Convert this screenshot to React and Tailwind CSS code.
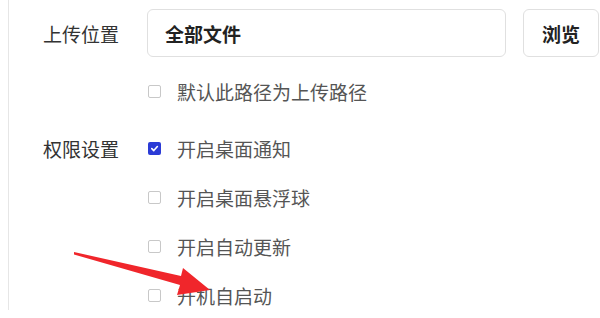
import React from "react";

const font = { fontFamily: '"Noto Sans CJK SC", "Noto Sans", sans-serif' };

function Box({ checked }) {
  if (checked) {
    return (
      <span className="flex h-[13px] w-[13px] items-center justify-center rounded-[2px] bg-[#2b3bd6]">
        <svg width="9" height="9" viewBox="0 0 10 10">
          <path d="M2 5.2 L4.2 7.3 L8.2 2.8" fill="none" stroke="#fff" strokeWidth="1.8" strokeLinecap="round" strokeLinejoin="round" />
        </svg>
      </span>
    );
  }
  return <span className="block h-[13px] w-[13px] rounded-[2px] border border-[#c8c8c8] bg-white" />;
}

function CheckRow({ checked, label }) {
  return (
    <div className="flex h-[49px] items-center gap-[16px]">
      <Box checked={checked} />
      <span className="text-[19px] leading-none text-[#555]">{label}</span>
    </div>
  );
}

export default function App() {
  return (
    <div className="relative h-[318px] w-[600px] overflow-hidden bg-white" style={font}>
      <div className="ml-[8px] h-[310px] border-l border-[#e6e6e6] pl-[34px] pt-[9px]">
        <div className="flex h-[48px] items-center">
          <span className="w-[104px] text-[19px] leading-none text-[#333]">上传位置</span>
          <div className="flex h-[48px] w-[359px] items-center rounded-[6px] border border-[#e0e0e0] pl-[17px]">
            <span className="text-[19px] font-bold leading-none text-[#222]">全部文件</span>
          </div>
          <div className="ml-[17px] flex h-[48px] w-[76px] items-center justify-center rounded-[6px] border border-[#e0e0e0]">
            <span className="text-[19px] font-bold leading-none text-[#222]">浏览</span>
          </div>
        </div>
        <div className="mt-[10px] pl-[105px]">
          <CheckRow label="默认此路径为上传路径" />
        </div>
        <div className="mt-[8px] flex">
          <div className="flex h-[49px] w-[105px] items-center">
            <span className="text-[19px] leading-none text-[#333]">权限设置</span>
          </div>
          <div className="flex flex-col">
            <CheckRow checked label="开启桌面通知" />
            <CheckRow label="开启桌面悬浮球" />
            <CheckRow label="开启自动更新" />
            <CheckRow label="开机自启动" />
          </div>
        </div>
      </div>
      <svg className="pointer-events-none absolute left-0 top-0" width="600" height="318" viewBox="0 0 600 318">
        <polygon points="74,252 181,276 183,268 210,290 177,295 180,285 74,254.5" fill="#f0262b" />
      </svg>
    </div>
  );
}
